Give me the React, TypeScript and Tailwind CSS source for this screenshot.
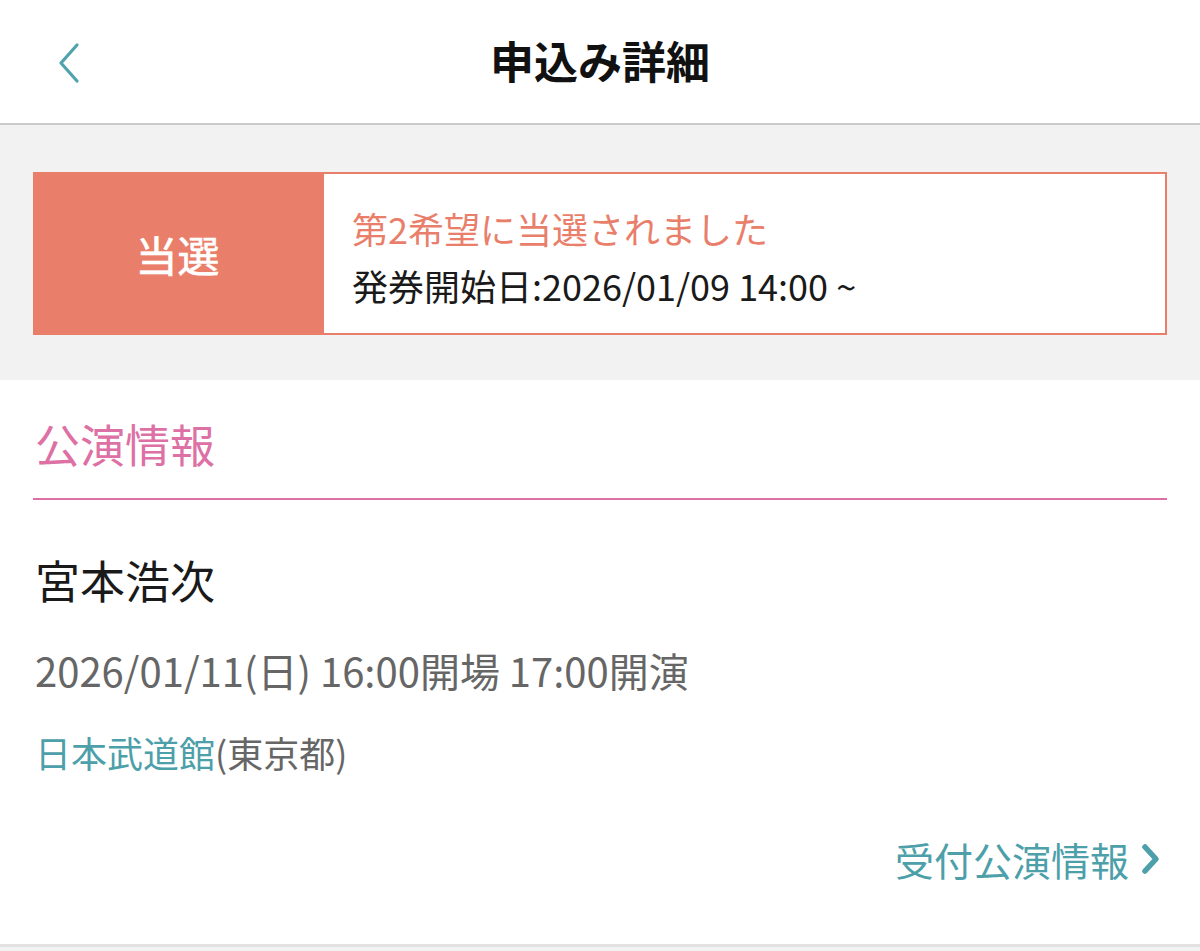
const font = { fontFamily: '"Noto Sans CJK JP", "Noto Sans", sans-serif' };

function BackIcon() {
  return (
    <svg width="24" height="42" viewBox="0 0 24 42" fill="none">
      <path d="M20 3 L4 21 L20 39" stroke="#4fa3ad" strokeWidth="3.2" strokeLinecap="round" strokeLinejoin="round" />
    </svg>
  );
}

function ChevronRight() {
  return (
    <svg width="22" height="32" viewBox="0 0 22 32" fill="none">
      <path d="M5 4 L16 16 L5 28" stroke="#4d9faa" strokeWidth="5.5" strokeLinecap="round" strokeLinejoin="round" />
    </svg>
  );
}

export default function App() {
  return (
    <div className="w-[1200px] h-[951px] bg-[#f2f2f2] overflow-hidden" style={font}>
      {/* header */}
      <header className="h-[125px] bg-white border-b-2 border-[#cacaca] grid grid-cols-[1fr_auto_1fr] items-center">
        <div className="pl-[57px] pt-[2px] flex items-center">
          <BackIcon />
        </div>
        <h1 className="text-[44px] font-bold text-[#111] leading-none pb-[4px]">申込み詳細</h1>
        <div />
      </header>

      {/* status */}
      <section className="px-[33px] pt-[47px] pb-[45px]">
        <div className="flex h-[163px] border-2 border-[#e97f6b] bg-white">
          <div className="w-[289px] bg-[#e97f6b] flex items-center justify-center">
            <span className="text-white text-[42px] leading-none pr-[4px] [-webkit-text-stroke:0.6px_white]">当選</span>
          </div>
          <div className="flex-1 flex flex-col justify-center pl-[28px] gap-[13px] pt-[6px]">
            <p className="text-[#e97f6b] text-[36px] leading-[44px]">第2希望に当選されました</p>
            <p className="text-[#1a1a1a] text-[36px] leading-[44px]">発券開始日:2026/01/09 14:00 ~</p>
          </div>
        </div>
      </section>

      {/* performance info */}
      <section className="bg-white border-b-[3px] border-[#e2e2e2] px-[33px] h-[567px] flex flex-col">
        <div className="h-[120px] border-b-2 border-[#dd70a4] flex items-center pl-[2px]">
          <h2 className="text-[#dd70a4] text-[45px] leading-none pt-[8px]">公演情報</h2>
        </div>
        <p className="mt-[56px] text-[#1a1a1a] text-[45px] leading-[48px] pl-[2px]">宮本浩次</p>
        <p className="mt-[44px] text-[#666] text-[40px] leading-[44px] pl-[2px]">2026/01/11(日) 16:00開場 17:00開演</p>
        <p className="mt-[38px] text-[36px] leading-[44px] pl-[2px]">
          <span className="text-[#4d9faa]">日本武道館</span>
          <span className="text-[#666]">(東京都)</span>
        </p>
        <div className="mt-[63px] flex justify-end items-center gap-[11px] pr-[5px]">
          <span className="text-[#4d9faa] text-[39px] leading-[44px]">受付公演情報</span>
          <ChevronRight />
        </div>
      </section>
    </div>
  );
}
